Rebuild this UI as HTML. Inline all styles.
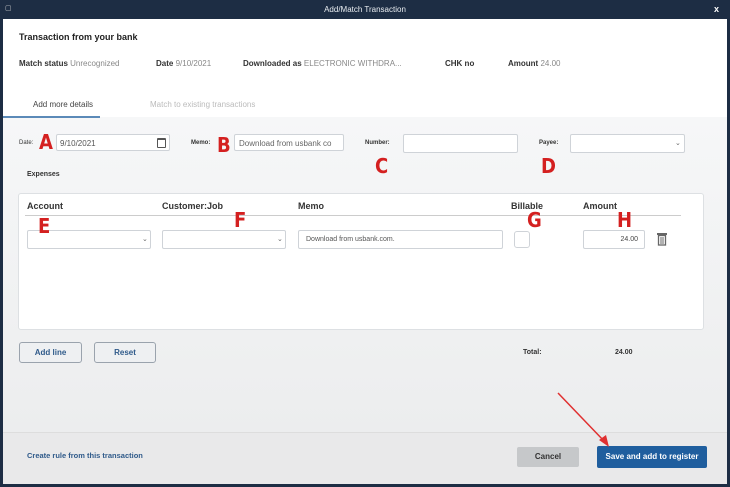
<!DOCTYPE html>
<html><head><style>
*{box-sizing:border-box;margin:0;padding:0}
body{width:730px;height:487px;overflow:hidden;background:#1d2d44;font-family:"Liberation Sans",sans-serif;position:relative}
.abs{position:absolute}
.win{left:3px;top:19px;width:724px;height:465px;background:#fff}
.body{left:3px;top:117px;width:724px;height:315px;background:linear-gradient(#f6f7f8,#ecedee)}
.foot{left:3px;top:432px;width:724px;height:52px;background:#e9e9ea;border-top:1px solid #ddd}
.t{font-size:8px;color:#333;white-space:nowrap}
.b{font-weight:bold}
.g{color:#888}
.inp{background:#fff;border:1px solid #cfd3d8;border-radius:2px}
.L{z-index:5;color:#d42020;font-weight:bold;font-size:20px;line-height:20px;font-family:"DejaVu Sans Condensed","Liberation Sans Narrow","Liberation Sans",sans-serif}
.btn{border:1px solid #9aa3ad;border-radius:3px;background:#eef0f2;color:#2f5a8a;font-size:8px;font-weight:bold;text-align:center;line-height:19px}
.chev{font-size:7px;color:#666}
</style></head><body>
<div class="abs t" style="left:5px;top:4px;color:#ccc;font-size:7px">▢</div>
<div class="abs t" style="left:0;width:730px;top:5px;text-align:center;color:#e8ecf0;font-size:8px">Add/Match Transaction</div>
<div class="abs t b" style="left:714px;top:4px;color:#fff;font-size:9px">x</div>
<div class="abs win"></div>
<div class="abs t b" style="left:19px;top:32px;font-size:9px;color:#222">Transaction from your bank</div>
<div class="abs t" style="left:19px;top:59px"><b>Match status</b> <span class="g">Unrecognized</span></div>
<div class="abs t" style="left:156px;top:59px"><b>Date</b> <span class="g">9/10/2021</span></div>
<div class="abs t" style="left:243px;top:59px"><b>Downloaded as</b> <span class="g">ELECTRONIC WITHDRA...</span></div>
<div class="abs t" style="left:445px;top:59px"><b>CHK no</b></div>
<div class="abs t" style="left:508px;top:59px"><b>Amount</b> <span class="g">24.00</span></div>
<div class="abs t" style="left:33px;top:100px;color:#444">Add more details</div>
<div class="abs t" style="left:150px;top:100px;color:#bbb">Match to existing transactions</div>
<div class="abs body"></div>
<div class="abs" style="left:3px;top:116px;width:97px;height:2px;background:#5b8ab8"></div>
<div class="abs t" style="left:19px;top:140px;font-size:6px">Date:</div>
<div class="abs L" style="left:39px;top:132px">A</div>
<div class="abs inp" style="left:56px;top:134px;width:114px;height:17px"><span class="t g" style="position:absolute;left:3px;top:4px;color:#555">9/10/2021</span><span class="abs" style="left:100px;top:3px;width:9px;height:10px;border:1.5px solid #555;border-top-width:2.5px;border-radius:1px"></span></div>
<div class="abs t" style="left:191px;top:140px;font-size:6px;font-weight:bold">Memo:</div>
<div class="abs L" style="left:217px;top:135px">B</div>
<div class="abs inp" style="left:234px;top:134px;width:110px;height:17px"><span class="t" style="position:absolute;left:4px;top:4px;color:#666">Download from usbank co</span></div>
<div class="abs t" style="left:365px;top:140px;font-size:6px;font-weight:bold">Number:</div>
<div class="abs inp" style="left:403px;top:134px;width:115px;height:19px"></div>
<div class="abs L" style="left:375px;top:156px">C</div>
<div class="abs t" style="left:539px;top:140px;font-size:6px;font-weight:bold">Payee:</div>
<div class="abs inp" style="left:570px;top:134px;width:115px;height:19px"><span class="abs chev" style="left:104px;top:4px">⌄</span></div>
<div class="abs L" style="left:541px;top:156px">D</div>
<div class="abs t b" style="left:27px;top:171px;font-size:7px">Expenses</div>
<div class="abs" style="left:18px;top:193px;width:686px;height:137px;background:#fff;border:1px solid #dde0e3;border-radius:3px"></div>
<div class="abs t b" style="left:27px;top:201px;font-size:9px">Account</div>
<div class="abs t b" style="left:162px;top:201px;font-size:9px">Customer:Job</div>
<div class="abs t b" style="left:298px;top:201px;font-size:9px">Memo</div>
<div class="abs t b" style="left:511px;top:201px;font-size:9px">Billable</div>
<div class="abs t b" style="left:583px;top:201px;font-size:9px">Amount</div>
<div class="abs" style="left:25px;top:215px;width:656px;height:1px;background:#ccc"></div>
<div class="abs L" style="left:38px;top:216px">E</div>
<div class="abs L" style="left:234px;top:210px">F</div>
<div class="abs L" style="left:527px;top:210px">G</div>
<div class="abs L" style="left:617px;top:210px">H</div>
<div class="abs inp" style="left:27px;top:230px;width:124px;height:19px"><span class="abs chev" style="left:114px;top:4px">⌄</span></div>
<div class="abs inp" style="left:162px;top:230px;width:124px;height:19px"><span class="abs chev" style="left:114px;top:4px">⌄</span></div>
<div class="abs inp" style="left:298px;top:230px;width:205px;height:19px"><span class="t" style="position:absolute;left:7px;top:5px;font-size:7px;color:#555">Download from usbank.com.</span></div>
<div class="abs inp" style="left:514px;top:231px;width:16px;height:17px;border-radius:3px"></div>
<div class="abs inp" style="left:583px;top:230px;width:62px;height:19px"><span class="t" style="position:absolute;right:6px;top:5px;font-size:7px;color:#444">24.00</span></div>
<svg class="abs" style="left:656px;top:232px" width="12" height="14"><rect x="1" y="1" width="10" height="2" fill="#666"/><rect x="2.5" y="3.5" width="7" height="9.5" fill="none" stroke="#666" stroke-width="1.3"/><line x1="5" y1="5" x2="5" y2="12" stroke="#666"/><line x1="7" y1="5" x2="7" y2="12" stroke="#666"/></svg>
<div class="abs btn" style="left:19px;top:342px;width:63px;height:21px">Add line</div>
<div class="abs btn" style="left:94px;top:342px;width:62px;height:21px">Reset</div>
<div class="abs t b" style="left:523px;top:349px;font-size:7px">Total:</div>
<div class="abs t b" style="left:615px;top:349px;font-size:7px">24.00</div>
<div class="abs foot"></div>
<div class="abs t b" style="left:27px;top:451px;color:#2f5a8a;font-size:7.5px">Create rule from this transaction</div>
<div class="abs" style="left:517px;top:447px;width:62px;height:20px;background:#c6c8ca;border-radius:2px;color:#333;font-size:8px;font-weight:bold;text-align:center;line-height:20px">Cancel</div>
<div class="abs" style="left:597px;top:446px;width:110px;height:22px;background:#1f5e9e;border-radius:2px;color:#fff;font-size:8px;font-weight:bold;text-align:center;line-height:22px">Save and add to register</div>
<svg class="abs" style="left:555px;top:390px" width="60" height="60"><line x1="3" y1="3" x2="50" y2="52" stroke="#e03030" stroke-width="1.5"/><polygon points="54,57 44,50 51,45" fill="#e03030"/></svg>
</body></html>
